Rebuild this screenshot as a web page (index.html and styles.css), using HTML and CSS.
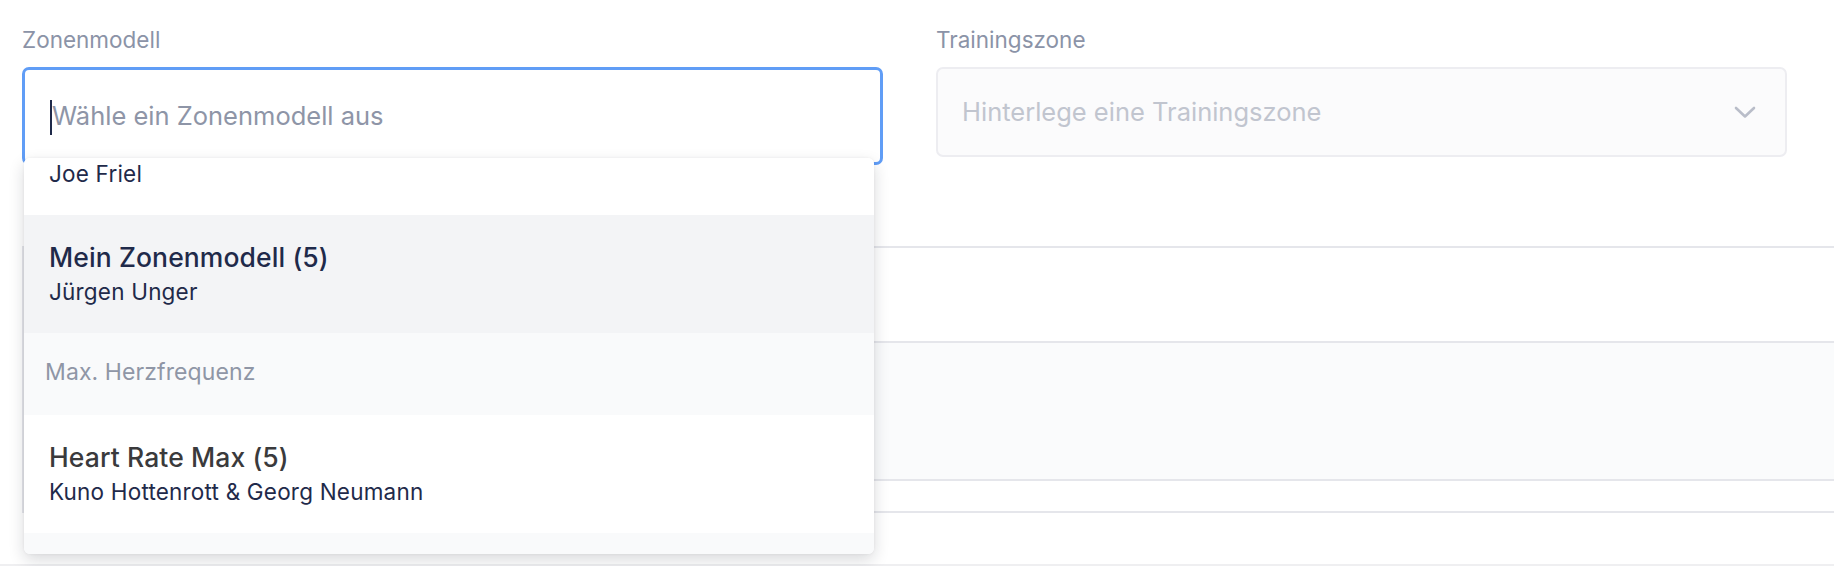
FILE: index.html
```html
<!DOCTYPE html>
<html lang="de">
<head>
<meta charset="utf-8">
<title>Zonenmodell</title>
<link rel="stylesheet" href="styles.css">
</head>
<body>
<div class="page">
  <div class="form-row">
    <div class="field field-left">
      <div class="label">Zonenmodell</div>
      <div class="combo">
        <div class="combo-input">
          <span class="caret"></span><span class="placeholder">Wähle ein Zonenmodell aus</span>
        </div>
        <div class="menu">
          <div class="menu-list">
            <div class="option">
              <div class="opt-title">Friel (7)</div>
              <div class="opt-sub">Joe Friel</div>
            </div>
            <div class="option hover">
              <div class="opt-title">Mein Zonenmodell (5)</div>
              <div class="opt-sub">Jürgen Unger</div>
            </div>
            <div class="group">Max. Herzfrequenz</div>
            <div class="option">
              <div class="opt-title dark">Heart Rate Max (5)</div>
              <div class="opt-sub">Kuno Hottenrott &amp; Georg Neumann</div>
            </div>
            <div class="group">&nbsp;</div>
          </div>
        </div>
      </div>
    </div>
    <div class="field field-right">
      <div class="label">Trainingszone</div>
      <div class="select">
        <span class="select-placeholder">Hinterlege eine Trainingszone</span>
        <svg class="chevron" width="22" height="13" viewBox="0 0 22 13" aria-hidden="true">
          <path d="M2 2 L11 10.5 L20 2" fill="none" stroke="#b9bdc9" stroke-width="2.6" stroke-linecap="round" stroke-linejoin="round"/>
        </svg>
      </div>
    </div>
  </div>

  <div class="table">
    <div class="trow head"></div>
    <div class="trow filled"></div>
    <div class="trow thin"></div>
  </div>
  <div class="divider"></div>
</div>
</body>
</html>
```

FILE: styles.css
```css
* { box-sizing: border-box; }
html, body {
  margin: 0;
  padding: 0;
  background: #ffffff;
  overflow: hidden;
}
body {
  font-family: "Inter", "Noto Sans", sans-serif;
  color: #1f2a4a;
}
.page {
  padding: 26px 47px 0 22px;
}
.form-row {
  display: flex;
  gap: 53px;
  align-items: flex-start;
}
.field-left { width: 861px; }
.field-right { width: 851px; }
.label {
  font-size: 22.5px;
  line-height: 28px;
  color: #8b93a7;
  margin-bottom: 13px;
}
.combo {
  position: relative;
}
.combo-input {
  height: 98px;
  border: 3px solid #609df6;
  border-radius: 7px;
  display: flex;
  align-items: center;
  padding-left: 25px;
  background: #fff;
}
.caret {
  width: 2px;
  height: 35px;
  background: #1f2a4a;
  margin-top: 3px;
}
.placeholder {
  font-size: 25.5px;
  line-height: 32px;
  color: #8e95a7;
}
.menu {
  position: absolute;
  top: 91px;
  left: 2px;
  width: 850px;
  height: 396px;
  background: #fff;
  border-radius: 6px;
  overflow: hidden;
  box-shadow: 0 6px 16px rgba(20, 24, 40, 0.16), 0 0 3px rgba(20, 24, 40, 0.06);
  z-index: 5;
}
.menu-list {
  margin-top: -61px;
  display: flex;
  flex-direction: column;
}
.option {
  height: 118px;
  padding: 26px 25px 0 25px;
  background: #fff;
}
.option.hover { background: #f3f4f6; }
.opt-title {
  font-size: 26.5px;
  line-height: 32px;
  font-weight: 500;
  letter-spacing: 0.1px;
  color: #1f2a4a;
}
.opt-title.dark { color: #3a3a3c; }
.opt-sub {
  margin-top: 6px;
  font-size: 22.5px;
  line-height: 26px;
  letter-spacing: 0.2px;
  color: #1f2a4a;
}
.group {
  height: 82px;
  padding: 25px 21px 0 21px;
  background: #f9fafb;
  font-size: 23px;
  line-height: 28px;
  letter-spacing: 0.1px;
  color: #8f96a6;
}
.select {
  height: 90px;
  border: 2px solid #ededf1;
  border-radius: 7px;
  background: #fbfbfc;
  display: flex;
  align-items: center;
  justify-content: space-between;
  padding: 0 29px 0 24px;
}
.select-placeholder {
  font-size: 25.5px;
  line-height: 32px;
  color: #c1c5cf;
}
.chevron { display: block; }
.table {
  margin-top: 81px;
  margin-right: -47px;
  border-top: 2px solid #e5e6eb;
  border-left: 2px solid #e5e6eb;
}
.trow { border-bottom: 2px solid #e5e6eb; }
.trow.head { height: 95px; }
.trow.filled { height: 138px; background: #fafbfc; }
.trow.thin { height: 32px; }
.divider {
  margin: 51px -47px 0 -22px;
  height: 2px;
  background: #efeff1;
}
```
